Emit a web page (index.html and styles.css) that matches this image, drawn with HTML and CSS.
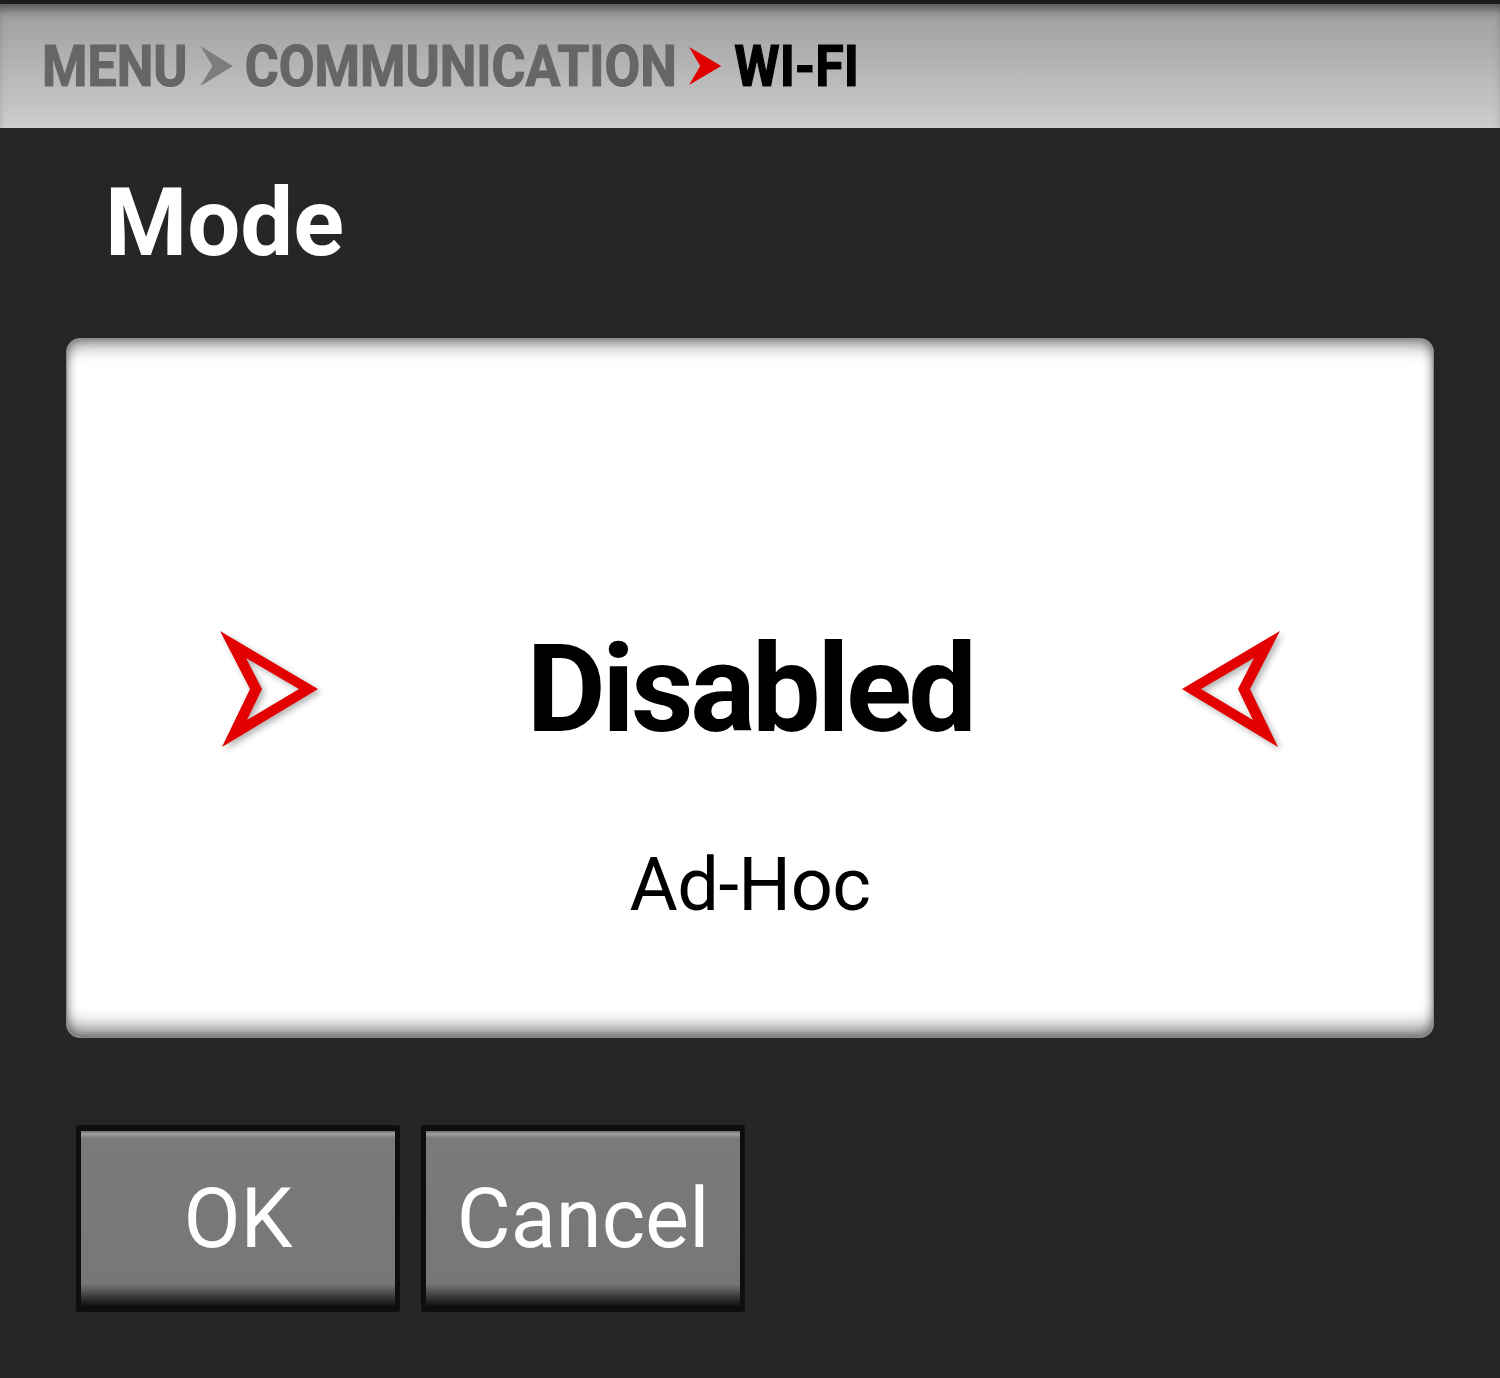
FILE: index.html
```html
<!DOCTYPE html>
<html lang="en">
<head>
    <meta charset="UTF-8">
    <meta name="viewport" content="width=device-width, initial-scale=1.0">
    <title>Wi-Fi Mode</title>
    <link rel="stylesheet" href="styles.css">
</head>
<body>

<div class="header">
    <div class="crumbs">
        <span class="crumb">MENU</span>
        <svg class="chevron" viewBox="0 0 32 40" preserveAspectRatio="none">
            <polygon points="0,0 32,20 0,40 12,20" fill="#7d7d7d"/>
        </svg>
        <span class="crumb">COMMUNICATION</span>
        <svg class="chevron" viewBox="0 0 32 40" preserveAspectRatio="none">
            <polygon points="0,1 32,20 0,39 11,20" fill="#e00000"/>
        </svg>
        <span class="crumb current">WI-FI</span>
    </div>
</div>

<h1 class="title">Mode</h1>

<div class="picker">
    <div class="picker-row">
        <svg class="arrow" viewBox="0 0 110 125">
            <path d="M5,4 L103,62 L7,120 L35,62 Z M31,31 L47,62 L32,93 L84,62 Z" fill="#e30000" fill-rule="evenodd"/>
        </svg>
        <div class="option selected">Disabled</div>
        <svg class="arrow flip" viewBox="0 0 110 125">
            <path d="M5,4 L103,62 L7,120 L35,62 Z M31,31 L47,62 L32,93 L84,62 Z" fill="#e30000" fill-rule="evenodd"/>
        </svg>
    </div>
    <div class="option">Ad-Hoc</div>
</div>

<div class="buttons">
    <button class="btn">OK</button>
    <button class="btn">Cancel</button>
</div>

</body>
</html>
```

FILE: styles.css
```css
body {
    margin: 0;
    padding: 0;
    background-color: #262626;
    font-family: Roboto, "Liberation Sans", sans-serif;
    height: 1378px;
    overflow: hidden;
}

.header {
    height: 124px;
    border-top: 4px solid #1c1c1c;
    background: linear-gradient(to bottom, #9c9c9c, #cdcdcd);
    box-shadow: inset 0 10px 12px -6px rgba(0, 0, 0, 0.55);
    display: flex;
    align-items: center;
    padding-left: 42px;
}

.crumbs {
    display: flex;
    align-items: center;
    gap: 14px;
    transform: scaleX(0.895);
    transform-origin: left center;
}

.crumb {
    font-size: 58px;
    font-weight: 700;
    line-height: 1;
    color: #666;
    -webkit-text-stroke: 1.2px #666;
    text-shadow: 0 1px 0 rgba(255, 255, 255, 0.35);
}

.crumb.current {
    color: #000;
    -webkit-text-stroke: 1.2px #000;
}

.chevron {
    width: 36px;
    height: 40px;
}

.title {
    margin: 48px 0 0 105px;
    font-size: 94px;
    font-weight: 700;
    line-height: 1;
    color: #fff;
}

.picker {
    margin: 68px 0 0 66px;
    width: 1368px;
    height: 700px;
    background: #fff;
    border: 1px solid #8a8a8a;
    border-radius: 14px;
    box-shadow: inset 0 0 10px rgba(0, 0, 0, 0.4),
                inset 0 16px 16px -8px rgba(0, 0, 0, 0.35),
                inset 0 -18px 18px -8px rgba(0, 0, 0, 0.45);
    display: flex;
    flex-direction: column;
    align-items: center;
    box-sizing: border-box;
    padding-top: 288px;
}

.picker-row {
    display: grid;
    grid-template-columns: 110px 1fr 110px;
    align-items: center;
    width: 100%;
    box-sizing: border-box;
    padding: 0 148px;
    margin-bottom: 96px;
}

.arrow {
    width: 110px;
    height: 125px;
    filter: drop-shadow(3px 3px 3px rgba(0, 0, 0, 0.3));
}

.arrow.flip {
    transform: scaleX(-1);
    filter: drop-shadow(-3px 3px 3px rgba(0, 0, 0, 0.3));
}

.option {
    font-size: 74px;
    line-height: 1;
    color: #000;
    text-align: center;
    letter-spacing: -0.5px;
}

.option.selected {
    font-size: 122px;
    font-weight: 700;
    letter-spacing: -3.5px;
}

.buttons {
    display: flex;
    gap: 21px;
    margin: 87px 0 0 76px;
}

.btn {
    width: 324px;
    height: 187px;
    box-sizing: border-box;
    border: 6px solid #0e0e0e;
    border-left-width: 5px;
    border-right-width: 5px;
    border-radius: 3px;
    background: linear-gradient(to bottom,
        #6e6e6e 0, #a0a0a0 3px, #7a7a7a 7px,
        #777 calc(100% - 22px), #2a2a2a calc(100% - 6px), #111 100%);
    color: #fff;
    font-family: Roboto, "Liberation Sans", sans-serif;
    font-size: 83px;
    line-height: 1;
    padding: 0;
    display: flex;
    align-items: center;
    justify-content: center;
}
```
